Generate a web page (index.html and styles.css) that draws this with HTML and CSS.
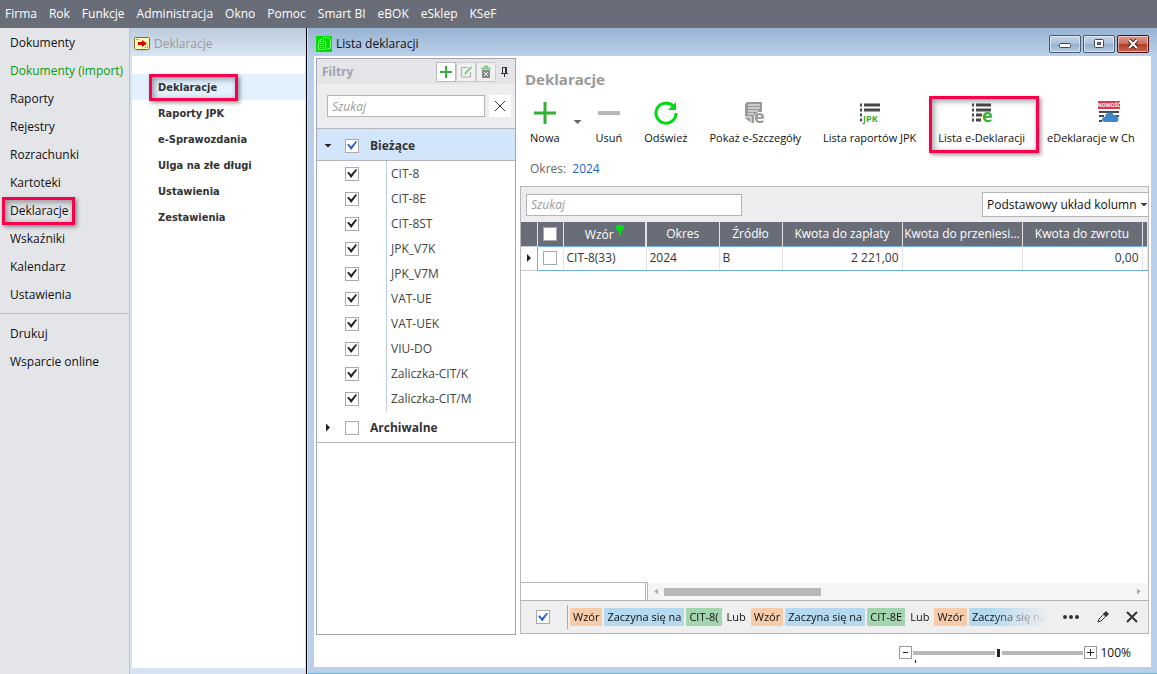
FILE: index.html
```html
<!DOCTYPE html>
<html lang="pl">
<head>
<meta charset="utf-8">
<title>Lista deklaracji</title>
<link rel="stylesheet" href="styles.css">
</head>
<body>

<nav class="menubar">
	<a href="#">Firma</a>
	<a href="#">Rok</a>
	<a href="#">Funkcje</a>
	<a href="#">Administracja</a>
	<a href="#">Okno</a>
	<a href="#">Pomoc</a>
	<a href="#">Smart BI</a>
	<a href="#">eBOK</a>
	<a href="#">eSklep</a>
	<a href="#">KSeF</a>
</nav>

<div class="workspace">

	<nav class="sidebar">
		<ul>
			<li><a href="#">Dokumenty</a></li>
			<li><a href="#" class="import">Dokumenty (import)</a></li>
			<li><a href="#">Raporty</a></li>
			<li><a href="#">Rejestry</a></li>
			<li><a href="#">Rozrachunki</a></li>
			<li><a href="#">Kartoteki</a></li>
			<li><a href="#" class="marked">Deklaracje</a></li>
			<li><a href="#">Wskaźniki</a></li>
			<li><a href="#">Kalendarz</a></li>
			<li><a href="#">Ustawienia</a></li>
		</ul>
		<ul>
			<li><a href="#">Drukuj</a></li>
			<li><a href="#">Wsparcie online</a></li>
		</ul>
	</nav>

	<section class="tree">
		<header class="tree-title">
			<svg width="16" height="14" viewBox="0 0 16 14">
				<path d="M4 13h1M7 13h2M11 13h1" stroke="#777"/>
				<rect x=".5" y=".5" width="15" height="12" rx="1" fill="#fffbb0" stroke="#8a6a2a"/>
				<path d="M2 2.500h1M4 2.500h1M11 10.500h1M13 10.500h1M13 8.500h1" stroke="#3a3"/>
				<path d="M4 5h4V3l5 3.500-5 3.500V8H4z" fill="#d80000"/>
			</svg>
			Deklaracje
		</header>
		<ul>
			<li class="active"><a href="#" class="marked">Deklaracje</a></li>
			<li><a href="#">Raporty JPK</a></li>
			<li><a href="#">e-Sprawozdania</a></li>
			<li><a href="#">Ulga na złe długi</a></li>
			<li><a href="#">Ustawienia</a></li>
			<li><a href="#">Zestawienia</a></li>
		</ul>
	</section>

	<section class="window">
		<header class="window-title">
			<svg width="16" height="16" viewBox="0 0 16 16">
				<rect width="16" height="16" fill="#00e000"/>
				<path d="M7.500 5V1.500h5l2 2v9H11M2.500 5.500h7v8h-7zM4 7.500h4M4 9.500h1M6 9.500h2M4 11.500h1M6 11.500h2M4 5.500V3.500h2" fill="none" stroke="#7dff7d"/>
			</svg>
			<h1>Lista deklaracji</h1>
			<div class="window-buttons">
				<button aria-label="Minimalizuj"><svg width="14" height="12" viewBox="0 0 14 12"><rect x="1.500" y="5.500" width="11" height="4" rx="1" fill="#fff" stroke="#3c4654"/></svg></button>
				<button aria-label="Maksymalizuj"><svg width="14" height="12" viewBox="0 0 14 12"><rect x="2.500" y="1.500" width="9" height="8" rx="1" fill="#fff" stroke="#3c4654"/><rect x="5.500" y="4.500" width="3" height="2" fill="#8aa" stroke="#3c4654"/></svg></button>
				<button aria-label="Zamknij" class="close"><svg width="14" height="12" viewBox="0 0 14 12"><path d="M3 2l8 8M11 2l-8 8" stroke="#4a2020" stroke-width="4"/><path d="M3 2l8 8M11 2l-8 8" stroke="#fff" stroke-width="2"/></svg></button>
			</div>
		</header>

		<div class="window-body">

			<aside class="filters">
				<header class="filters-title">
					<h2>Filtry</h2>
					<button class="boxed add" aria-label="Dodaj filtr"><svg width="14" height="14" viewBox="0 0 14 14"><path d="M7 1v12M1 7h12" stroke="#35b035" stroke-width="2"/></svg></button>
					<button class="boxed" aria-label="Edytuj filtr"><svg width="14" height="14" viewBox="0 0 14 14"><path d="M9 2.500H2.500v9.500h9V7" fill="none" stroke="#aaa"/><path d="M5 10l1-3 6-6 1 2-6 6z" fill="#83cc8e"/></svg></button>
					<button class="boxed" aria-label="Usuń filtr"><svg width="14" height="14" viewBox="0 0 14 14"><path d="M3 5h8v8H3z" fill="#888"/><path d="M5 7l4 4M9 7l-4 4" stroke="#eee"/><path d="M2 3.500h10M5 1.500h4" stroke="#83cc8e" stroke-width="2"/></svg></button>
					<button class="pin" aria-label="Przypnij"><svg width="9" height="12" viewBox="0 0 9 12"><path d="M2 1.500h5M2.500 1v6M1 7.500h7M4.500 8v3" stroke="#333"/><path d="M5 1h2v6H5z" fill="#333"/></svg></button>
				</header>
				<div class="filters-search">
					<input type="text" placeholder="Szukaj" aria-label="Szukaj filtra">
					<button aria-label="Wyczyść"><svg width="12" height="12" viewBox="0 0 12 12"><path d="M1 1l10 10M11 1L1 11" stroke="#333" stroke-width="1"/></svg></button>
				</div>
				<div class="group open">
					<span class="caret-down"></span>
					<input type="checkbox" class="blue" id="g1" checked>
					<label for="g1">Bieżące</label>
				</div>
				<ul class="group-items">
					<li><input type="checkbox" id="f1" checked><label for="f1">CIT-8</label></li>
					<li><input type="checkbox" id="f2" checked><label for="f2">CIT-8E</label></li>
					<li><input type="checkbox" id="f3" checked><label for="f3">CIT-8ST</label></li>
					<li><input type="checkbox" id="f4" checked><label for="f4">JPK_V7K</label></li>
					<li><input type="checkbox" id="f5" checked><label for="f5">JPK_V7M</label></li>
					<li><input type="checkbox" id="f6" checked><label for="f6">VAT-UE</label></li>
					<li><input type="checkbox" id="f7" checked><label for="f7">VAT-UEK</label></li>
					<li><input type="checkbox" id="f8" checked><label for="f8">VIU-DO</label></li>
					<li><input type="checkbox" id="f9" checked><label for="f9">Zaliczka-CIT/K</label></li>
					<li><input type="checkbox" id="f10" checked><label for="f10">Zaliczka-CIT/M</label></li>
				</ul>
				<div class="group">
					<span class="caret-right"></span>
					<input type="checkbox" id="g2">
					<label for="g2">Archiwalne</label>
				</div>
			</aside>

			<main class="content">
				<h2 class="content-title">Deklaracje</h2>

				<div class="toolbar">
					<button><svg width="24" height="24" viewBox="0 0 24 24"><path d="M12 1v22M1 12h22" stroke="#35b035" stroke-width="3"/></svg>Nowa</button>
					<button class="more" aria-label="Nowa - więcej"><span class="caret-down"></span></button>
					<button><svg width="24" height="24" viewBox="0 0 24 24"><path d="M1 12h22" stroke="#b8b8b8" stroke-width="4"/></svg>Usuń</button>
					<button><svg width="24" height="24" viewBox="0 0 24 24"><path d="M19 5A10 10 0 1 0 22 12" fill="none" stroke="#00dc14" stroke-width="3"/><path d="M22 1v8h-8z" fill="#00dc14"/></svg>Odśwież</button>
					<button><svg width="24" height="24" viewBox="0 0 24 24"><path d="M4 1h15v10h-4l-4 4v7H8l-6-5V3z" fill="#999"/><path d="M5 4h12M5 7h12M5 10h10M5 13h6" stroke="#fff"/><path d="M2 16h6v6" fill="none" stroke="#fff"/><g class="letter grey"><text x="11" y="22">e</text></g></svg>Pokaż e-Szczegóły</button>
					<button><svg width="24" height="24" viewBox="0 0 24 24"><path d="M2 4h2M2 9h2M2 14h2M2 19h2M6 4h16M6 9h16" stroke="#484848" stroke-width="3"/><g class="jpk"><text x="5" y="21">JPK</text></g></svg>Lista raportów JPK</button>
					<button class="marked"><svg width="24" height="24" viewBox="0 0 24 24"><path d="M2 4h2M2 9h2M2 14h2M2 19h2M6 4h15M6 9h15M6 14h6M6 19h5" stroke="#484848" stroke-width="3"/><g class="letter"><text x="12" y="21">e</text></g></svg>Lista e-Deklaracji</button>
					<button class="last"><svg width="24" height="24" viewBox="0 0 24 24"><path d="M2 11h20M2 15h5M2 20h3M17 15h5" stroke="#484848" stroke-width="2"/><rect x="1" y="0" width="22" height="8" fill="#dc3a4c"/><g class="new"><text x="12" y="6" text-anchor="middle">NOWOŚĆ</text></g><path d="M8 21c-4 0-4-5 0-5 0-5 7-6 9-2 5 0 6 7 2 7z" fill="#3d87c9"/></svg><span>eDeklaracje w Ch</span></button>
				</div>

				<p class="period">Okres: <a href="#">2024</a></p>

				<div class="grid">
					<div class="grid-top">
						<input type="text" placeholder="Szukaj" aria-label="Szukaj">
						<select aria-label="Układ kolumn"><option>Podstawowy układ kolumn</option></select>
					</div>

					<table>
						<colgroup>
							<col class="c-mark"><col class="c-check"><col class="c-wzor"><col class="c-okres"><col class="c-zrodlo">
							<col class="c-kwota"><col class="c-kwota"><col class="c-kwota"><col>
						</colgroup>
						<thead>
							<tr>
								<th></th>
								<th><input type="checkbox" aria-label="Zaznacz wszystkie"></th>
								<th class="frozen">Wzór<svg width="8" height="10" viewBox="0 0 8 10"><path d="M4 5v5" stroke="#00dc14" stroke-width="2"/><path d="M1 0h6l1 1v3L5 7H3L0 4V1z" fill="#00dc14"/></svg></th>
								<th>Okres</th>
								<th>Źródło</th>
								<th>Kwota do zapłaty</th>
								<th>Kwota do przeniesi...</th>
								<th>Kwota do zwrotu</th>
								<th></th>
							</tr>
						</thead>
						<tbody>
							<tr>
								<td class="mark"><span class="caret-right"></span></td>
								<td class="check"><input type="checkbox" aria-label="Zaznacz CIT-8(33)"></td>
								<td>CIT-8(33)</td>
								<td>2024</td>
								<td>B</td>
								<td class="num">2 221,00</td>
								<td></td>
								<td class="num">0,00</td>
								<td></td>
							</tr>
						</tbody>
					</table>

					<div class="scroll-row">
						<div class="frozen-foot"></div>
						<div class="scrollbar">
							<span class="caret-left"></span>
							<div class="scroll-track"><div class="scroll-thumb"></div></div>
							<span class="caret-right"></span>
						</div>
					</div>

					<div class="filter-bar">
						<input type="checkbox" class="blue" aria-label="Filtr aktywny" checked>
						<div class="chips">
							<span class="chip field">Wzór</span>
							<span class="chip op">Zaczyna się na</span>
							<span class="chip val">CIT-8(</span>
							<span class="chip or">Lub</span>
							<span class="chip field">Wzór</span>
							<span class="chip op">Zaczyna się na</span>
							<span class="chip val">CIT-8E</span>
							<span class="chip or">Lub</span>
							<span class="chip field">Wzór</span>
							<span class="chip op">Zaczyna się na</span>
						</div>
						<button aria-label="Więcej"><svg width="18" height="12" viewBox="0 0 18 12"><path d="M1 6a2 2 0 1 0 4 0 2 2 0 1 0-4 0M7 6a2 2 0 1 0 4 0 2 2 0 1 0-4 0M13 6a2 2 0 1 0 4 0 2 2 0 1 0-4 0" fill="#333"/></svg></button>
						<button aria-label="Edytuj"><svg width="12" height="12" viewBox="0 0 12 12"><path d="M1 11l1-3 5-5 2 2-5 5z" fill="none" stroke="#333"/><path d="M6 3l3-3 3 3-3 3z" fill="#333"/></svg></button>
						<button aria-label="Usuń"><svg width="12" height="12" viewBox="0 0 12 12"><path d="M1 1l10 10M11 1L1 11" stroke="#333" stroke-width="2"/></svg></button>
					</div>
				</div>

				<div class="zoom">
					<button class="minus" aria-label="Pomniejsz"><svg width="7" height="7" viewBox="0 0 7 7"><path d="M1 3.500h5" stroke="#222"/></svg></button>
					<input type="range" id="zoom" min="0" max="200" value="100" aria-label="Powiększenie">
					<button aria-label="Powiększ"><svg width="7" height="7" viewBox="0 0 7 7"><path d="M0 3.500h7M3.500 0v7" stroke="#222"/></svg></button>
					<output for="zoom">100%</output>
				</div>
			</main>
		</div>
	</section>
</div>

</body>
</html>
```
FILE: styles.css
```css
* {box-sizing:border-box;}
body {margin:0; height:100vh; display:flex; flex-direction:column; overflow:hidden; font:12px/16px "Open Sans", "Noto Sans", sans-serif; color:#111;}
ul {list-style:none; margin:0; padding:0;}
h1, h2, p {margin:0;}
h1 {font-size:12px; font-weight:normal;}
a {color:inherit; text-decoration:none;}
svg {display:block; flex:none; overflow:visible;}
button, input, select {font:inherit; color:inherit; margin:0;}
button {padding:0; border:0; background:none; display:flex; align-items:center; justify-content:center;}

/* check boxes */
input[type=checkbox] {appearance:none; flex:none; width:14px; height:14px; border:1px solid #aaa; background:#fff; display:grid; place-items:center;}
input[type=checkbox]:checked::before {content:""; width:10px; height:9px; background:#222; clip-path:polygon(0 40%, 20% 32%, 40% 62%, 88% 0, 100% 12%, 42% 100%);}
input.blue:checked::before {background:#2a5fd0;}
input[type=text] {height:22px; border:1px solid #b4b4b4; background:#fff; padding:0 4px; border-radius:0; min-width:0;}
input::placeholder {color:#999; font-style:italic;}

/* arrows */
.caret-down, .caret-right, .caret-left {flex:none; width:8px; height:4px; background:#222; clip-path:polygon(0 0, 100% 0, 50% 100%);}
.caret-right {width:4px; height:8px; clip-path:polygon(0 0, 100% 50%, 0 100%);}
.caret-left {width:4px; height:8px; clip-path:polygon(100% 0, 0 50%, 100% 100%);}

/* red frames */
.marked {position:relative;}
.marked::after {content:""; position:absolute; border:3px solid #f8004c; box-shadow:2px 2px 4px rgba(0,0,0,.4), inset 2px 2px 6px rgba(0,0,0,.4); pointer-events:none;}

.menubar {flex:none; height:28px; display:flex; align-items:center; gap:12px; padding:0 5px; background:#696d78; color:#fff;}

.workspace {flex:1; min-height:0; display:flex; background:#d5e3f2;}

.sidebar {width:130px; flex:none; padding-top:1px; background:#e4e5e9; border-right:1px solid #bcc3cf;}
.sidebar li {height:28px; padding:0 10px; display:flex; align-items:center; white-space:nowrap;}
.sidebar ul + ul {margin-top:4px; padding-top:6px; border-top:1px solid #bcbec6;}
.sidebar .import {color:#0a9a0a;}
.sidebar .marked::after {inset:-6px -6px -6px -8px;}

.tree {width:177px; flex:none; display:flex; flex-direction:column; border-right:1px solid #000; margin-right:1px;}
.tree-title {height:28px; display:flex; align-items:center; gap:4px; padding:4px 4px 0; color:#999; background:linear-gradient(#bccbdb, #d8e5f3);}
.tree ul {flex:1; margin:0 1px 6px 2px; padding-top:18px; background:#fff;}
.tree li {height:26px; padding:2px 0 0 26px; display:flex; align-items:center; font:bold 11px/18px "DejaVu Sans Condensed", "DejaVu Sans", sans-serif; color:#333;}
.tree li.active {background:#e3f1ff;}
.tree .marked::after {inset:-5px -21px -4px -9px;}

.window {flex:1; min-width:0; display:flex; flex-direction:column; padding:0 6px 6px; background:#bad0ea; border-bottom:1px solid #2cc8e4;}
.window-title {height:28px; flex:none; display:flex; align-items:center; gap:4px; margin:0 -6px; padding:4px 8px 0; background:linear-gradient(#97b3d2, #bad0ea);}
.window-buttons {display:flex; gap:2px; margin-left:auto;}
.window-buttons button {width:32px; height:18px; border:1px solid #4c5c70; border-radius:2px; background:linear-gradient(#c3d5e9, #aac0d9 50%, #94aecb 50%, #b4cce4); box-shadow:inset 0 0 0 1px rgba(255,255,255,.5);}
.window-buttons .close {border-color:#4a1010; background:linear-gradient(#dc9c90, #cc6a58 50%, #b33a22 50%, #c86450);}

.window-body {flex:1; min-height:0; display:flex; gap:4px; padding:2px 2px 0; background:#fff;}

.filters {width:200px; flex:none; margin-bottom:32px; border:1px solid #a3a5b3;}
.filters-title {height:25px; display:flex; align-items:center; padding:0 2px 0 5px; background:#e5e5e9;}
.filters-title h2 {flex:1; font-size:12px; color:#a0a3b0;}
.filters-title .boxed {width:20px; height:20px; border:1px solid #ccc; background:#f0f0f0;}
.filters-title .add {background:#fff; border-color:#bbb;}
.filters-title .pin {width:17px; height:20px;}
.filters-search {height:45px; display:flex; align-items:center; gap:4px; padding:0 4px 0 10px; background:#ededef; border-bottom:1px solid #b4b6c0;}
.filters-search input {flex:1;}
.filters-search button {width:22px; height:22px; background:#fff;}
.group {height:32px; display:flex; align-items:center; padding:2px 0 0 7px; border-bottom:1px solid #b4b4bc; font-weight:bold; color:#333;}
.group.open {background:#d3e5fa;}
.group input {margin:0 11px 0 13px;}
.group .caret-right {margin:0 2px;}
.group-items li {height:25px; display:flex; align-items:center; gap:27px; padding-left:28px; color:#444;}
.group-items label {flex:1; border-left:1px solid #b8cce4; line-height:25px; padding-left:4px;}

.content {flex:1; min-width:0; display:flex; flex-direction:column;}
.content-title {padding:11px 5px 0; font-size:15px; line-height:20px; color:#999;}
.toolbar {display:flex; gap:22px; padding:12px 10px 0; white-space:nowrap; font-size:11px; overflow-x:clip;}
.toolbar button {flex:none; flex-direction:column; gap:5px;}
.toolbar .more {width:8px; margin:0 -8px;}
.toolbar .more .caret-down {background:#666; margin-top:-3px;}
.toolbar .marked::after {inset:-5px -14px -7px -9px;}
.toolbar .last {width:124px;}
.toolbar .last span {align-self:flex-start;}
.jpk {font:bold 9px "Open Sans", sans-serif; fill:#35b035;}
.letter {font:bold 18px/1 "Open Sans", sans-serif; fill:#35b035;}
.letter.grey {fill:#999;}
.new {font:bold 5px "Open Sans", sans-serif; fill:#fff;}
.period {padding:15px 10px 9px; color:#666;}
.period a {color:#1a66cc; margin-left:3px;}

.grid {flex:1; min-height:0; display:flex; flex-direction:column; border:1px solid #b8b8b8;}
.grid-top {height:35px; flex:none; display:flex; align-items:center; justify-content:space-between; padding-left:5px; background:#ededef;}
.grid-top input {width:216px;}
.grid-top select {width:166px; height:25px; appearance:none; border:1px solid #b4b4b4; border-right:0; border-radius:0; padding:0 4px; background:linear-gradient(#444, #444) no-repeat 158px 10px / 6px 1px, linear-gradient(#444, #444) no-repeat 159px 11px / 4px 1px, linear-gradient(#444, #444) no-repeat 160px 12px / 2px 1px, #fff;}

table {width:100%; table-layout:fixed; border-collapse:collapse;}
.c-mark {width:16px;}
.c-check {width:26px;}
.c-wzor {width:83px;}
.c-okres {width:73px;}
.c-zrodlo {width:63px;}
.c-kwota {width:120px;}
th, td {height:24px; padding:0 3px; overflow:hidden; white-space:nowrap;}
th {padding:0; background:#696d78; color:#fff; font-weight:normal; border-right:1px solid #e4e4e8;}
th.frozen {border-right:2px solid #e4e4e8;}
th svg {display:inline-block; vertical-align:4px; margin-left:2px;}
td {color:#333; border-right:1px solid #e4e4e8; border-top:1px solid #6cb0e4; border-bottom:1px solid #6cb0e4;}
td.mark {padding:0 6px; border-color:#ccc #6cb0e4 #ccc #ccc;}
td.mark span {display:block;}
td.num {text-align:right;}
th input, td.check input {margin:0 auto;}
td:last-child, td.check {padding:0;}

.scroll-row {height:18px; flex:none; display:flex; margin-top:auto;}
.frozen-foot {width:127px; border:1px solid #b8b8b8; border-width:1px 3px 0 0; border-right-style:double;}
.scrollbar {flex:1; display:flex; align-items:center; gap:6px; padding:0 7px 0 6px; background:#f5f5f5; margin-top:1px;}
.scrollbar > span {background:#b0b0b0; height:6px;}
.scroll-track {flex:1;}
.scroll-thumb {width:157px; height:8px; background:#b8b8b8;}

.filter-bar {height:33px; flex:none; display:flex; align-items:center; gap:17px; padding:0 10px 0 15px; background:#efefef; border-top:1px solid #b4b4b4;}
.chips {flex:1; min-width:0; height:24px; display:flex; align-items:center; gap:2px; overflow:hidden; margin:0 -4px 0 0; border-left:1px solid #aaa; padding-left:2px; -webkit-mask:linear-gradient(90deg, #000 88%, transparent);}
.chip {flex:none; height:18px; line-height:18px; padding:0 3px; border-radius:1px; font-size:11px;}
.field {background:#f6ccaa;}
.op {background:#b5daf0;}
.val {background:#a3d6ae;}

.zoom {height:33px; flex:none; display:flex; align-items:center; justify-content:flex-end; gap:1px; padding:4px 18px 0 0;}
.zoom button {width:13px; height:13px; border:1px solid #999;}
.zoom .minus {position:relative;}
.zoom .minus::after {content:""; position:absolute; left:15px; top:13px; width:1px; height:3px; background:#222;}
.zoom input {appearance:none; width:170px; height:10px; background:linear-gradient(#b8b8b8, #b8b8b8) no-repeat 0 3px / 100% 4px;}
.zoom input::-webkit-slider-thumb {appearance:none; width:7px; height:10px; background:#222; border:solid #fff; border-width:1px 2px;}
.zoom output {margin-left:2px;}
```
